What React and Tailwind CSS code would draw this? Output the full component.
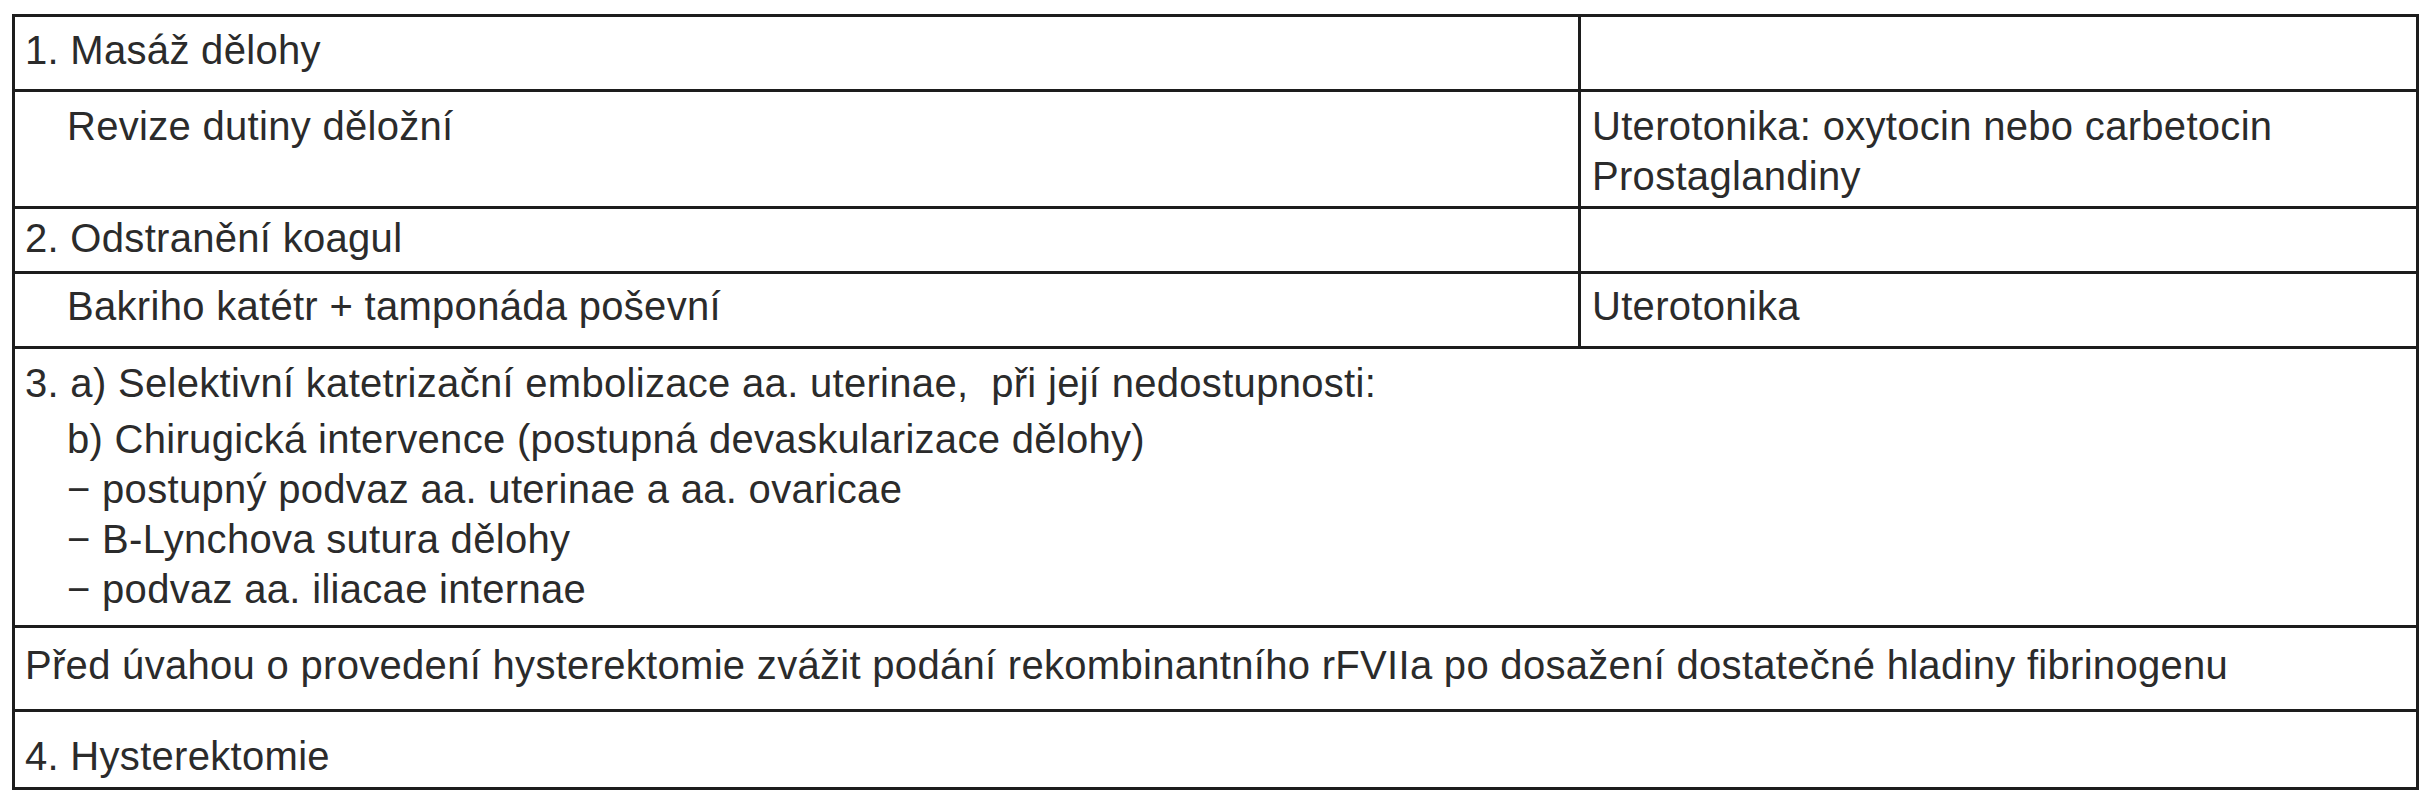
import React from 'react';

const line = 'border-[#1d1d1d]';

function App() {
  return (
    <div className="w-[2433px] h-[800px] bg-white pt-[14px] pl-[12px] font-['Liberation_Sans',Arial,sans-serif] text-[40px] leading-[50px] tracking-[0.3px] text-[#2b2b2b]">
      <div className={`w-[2407px] border-[3px] ${line}`}>
        {/* 1 */}
        <div className={`grid grid-cols-[1566px_1fr] h-[75px] border-b-[3px] ${line}`}>
          <div className={`border-r-[3px] ${line} pl-[10px] pt-[8px]`}>1. Masáž dělohy</div>
          <div></div>
        </div>
        <div className={`grid grid-cols-[1566px_1fr] h-[117px] border-b-[3px] ${line}`}>
          <div className={`border-r-[3px] ${line} pl-[52px] pt-[9px]`}>Revize dutiny děložní</div>
          <div className="pl-[11px] pt-[9px]">
            <div>Uterotonika: oxytocin nebo carbetocin</div>
            <div>Prostaglandiny</div>
          </div>
        </div>
        {/* 2 */}
        <div className={`grid grid-cols-[1566px_1fr] h-[65px] border-b-[3px] ${line}`}>
          <div className={`border-r-[3px] ${line} pl-[10px] pt-[4px]`}>2. Odstranění koagul</div>
          <div></div>
        </div>
        <div className={`grid grid-cols-[1566px_1fr] h-[75px] border-b-[3px] ${line}`}>
          <div className={`border-r-[3px] ${line} pl-[52px] pt-[7px]`}>Bakriho katétr + tamponáda poševní</div>
          <div className="pl-[11px] pt-[7px]">Uterotonika</div>
        </div>
        {/* 3 */}
        <div className={`h-[279px] border-b-[3px] ${line} pl-[10px] pt-[9px]`}>
          <div className="mb-[6px] whitespace-pre">3. a) Selektivní katetrizační embolizace aa. uterinae,  při její nedostupnosti:</div>
          <div className="pl-[42px]">
            <div>b) Chirugická intervence (postupná devaskularizace dělohy)</div>
            <div>− postupný podvaz aa. uterinae a aa. ovaricae</div>
            <div>− B-Lynchova sutura dělohy</div>
            <div>− podvaz aa. iliacae internae</div>
          </div>
        </div>
        <div className={`h-[84px] border-b-[3px] ${line} pl-[10px] pt-[12px]`}>
          Před úvahou o provedení hysterektomie zvážit podání rekombinantního rFVIIa po dosažení dostatečné hladiny fibrinogenu
        </div>
        {/* 4 */}
        <div className="h-[75px] pl-[10px] pt-[19px]">4. Hysterektomie</div>
      </div>
    </div>
  );
}

export default App;
